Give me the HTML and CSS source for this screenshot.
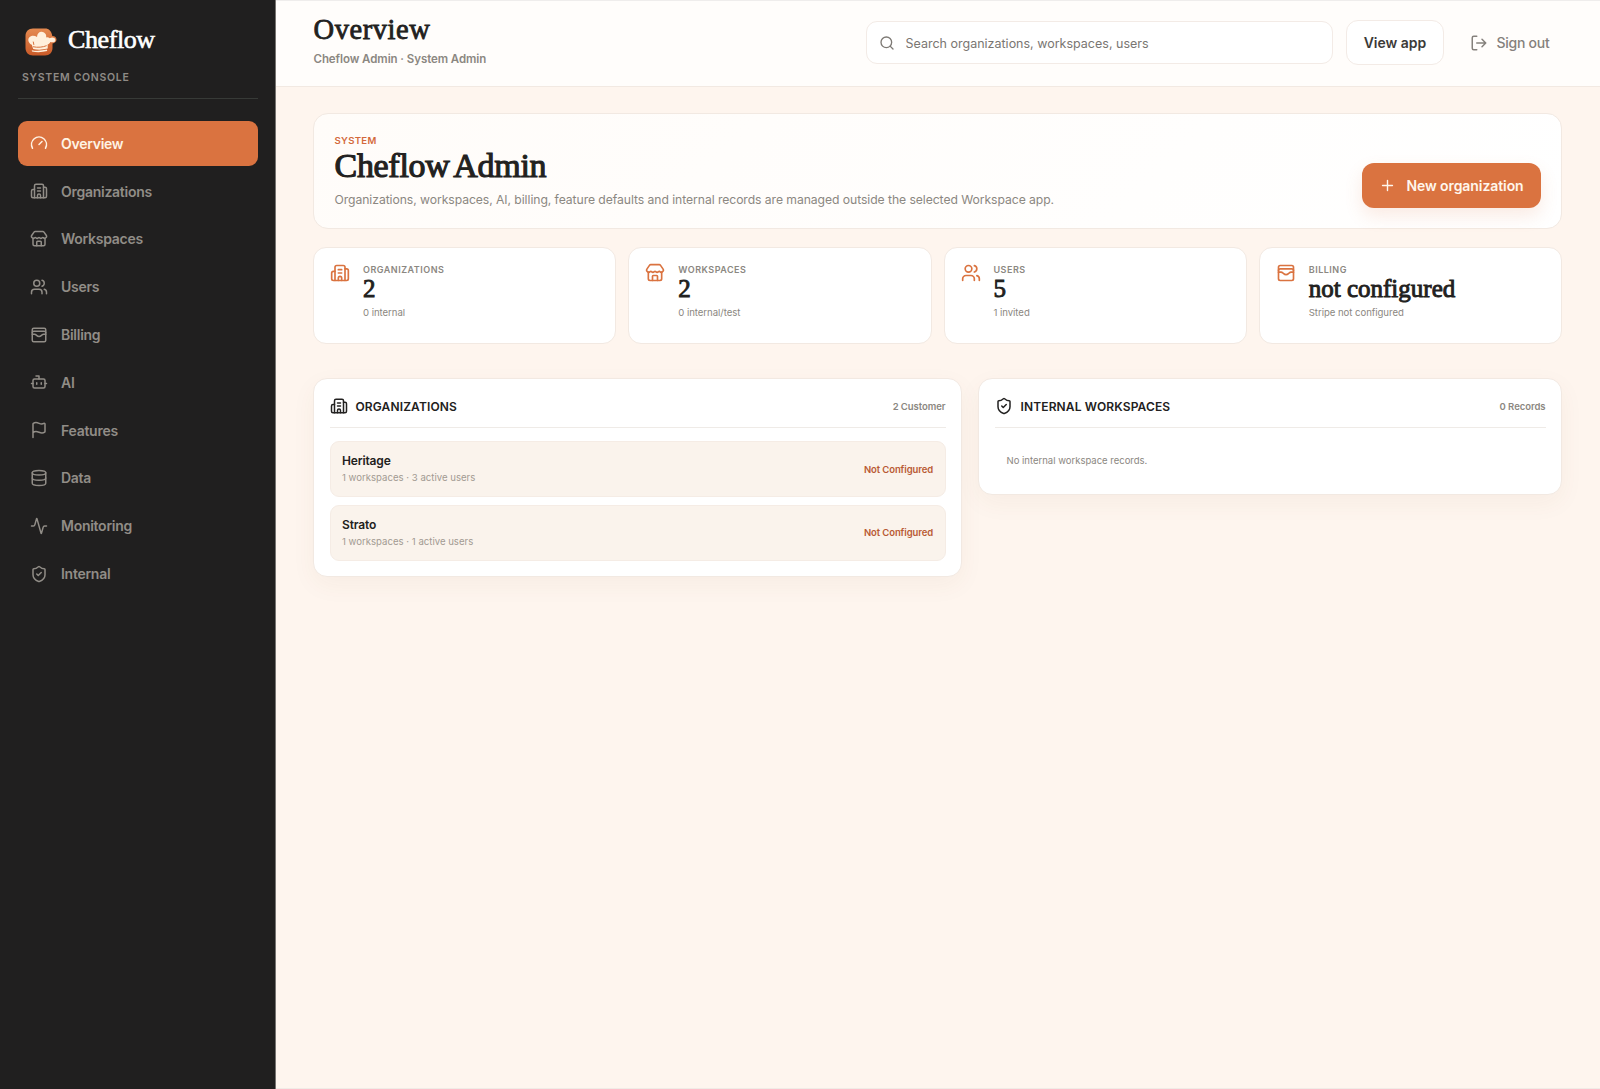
FILE: index.html
```html
<!DOCTYPE html>
<html lang="en">
<head>
  <meta charset="UTF-8" />
  <title>Cheflow Admin</title>
  <link rel="stylesheet" href="styles.css">
</head>
<body>
  <!-- icon sprite -->
  <svg class="sprite" aria-hidden="true">
    <symbol id="i-gauge" viewBox="0 0 24 24"><path d="m12 14 4-4"/><path d="M3.34 19a10 10 0 1 1 17.32 0"/></symbol>
    <symbol id="i-building" viewBox="0 0 24 24"><path d="M10 12h4M10 8h4M14 21v-3a2 2 0 0 0-4 0v3"/><path d="M6 10H4a2 2 0 0 0-2 2v7a2 2 0 0 0 2 2h16a2 2 0 0 0 2-2V9a2 2 0 0 0-2-2h-2"/><path d="M6 21V5a2 2 0 0 1 2-2h8a2 2 0 0 1 2 2v16"/></symbol>
    <symbol id="i-store" viewBox="0 0 24 24"><path d="M15 21v-5a1 1 0 0 0-1-1h-4a1 1 0 0 0-1 1v5"/><path d="M17.774 10.31a1.12 1.12 0 0 0-1.549 0 2.5 2.5 0 0 1-3.451 0 1.12 1.12 0 0 0-1.548 0 2.5 2.5 0 0 1-3.452 0 1.12 1.12 0 0 0-1.549 0 2.5 2.5 0 0 1-3.77-3.248l2.889-4.184A2 2 0 0 1 7 2h10a2 2 0 0 1 1.653.873l2.895 4.192a2.5 2.5 0 0 1-3.774 3.244"/><path d="M4 10.95V19a2 2 0 0 0 2 2h12a2 2 0 0 0 2-2v-8.05"/></symbol>
    <symbol id="i-users" viewBox="0 0 24 24"><path d="M16 21v-2a4 4 0 0 0-4-4H6a4 4 0 0 0-4 4v2"/><path d="M16 3.128a4 4 0 0 1 0 7.744"/><path d="M22 21v-2a4 4 0 0 0-3-3.87"/><circle cx="9" cy="7" r="4"/></symbol>
    <symbol id="i-wallet" viewBox="0 0 24 24"><rect width="18" height="18" x="3" y="3" rx="2"/><path d="M3 9a2 2 0 0 1 2-2h14a2 2 0 0 1 2 2"/><path d="M3 11h3c.8 0 1.6.3 2.1.9l1.1.9c1.6 1.6 4.1 1.6 5.7 0l1.1-.9c.5-.5 1.3-.9 2.1-.9H21"/></symbol>
    <symbol id="i-bot" viewBox="0 0 24 24"><path d="M12 8V4H8"/><rect width="16" height="12" x="4" y="8" rx="2"/><path d="M2 14h2M20 14h2M15 13v2M9 13v2"/></symbol>
    <symbol id="i-flag" viewBox="0 0 24 24"><path d="M4 22V4a1 1 0 0 1 .4-.8A6 6 0 0 1 8 2c3 0 5 2 7.333 2q2 0 3.067-.8A1 1 0 0 1 20 4v10a1 1 0 0 1-.4.8A6 6 0 0 1 16 16c-3 0-5-2-8-2a6 6 0 0 0-4 1.528"/></symbol>
    <symbol id="i-database" viewBox="0 0 24 24"><ellipse cx="12" cy="5" rx="9" ry="3"/><path d="M3 5v14a9 3 0 0 0 18 0V5"/><path d="M3 12a9 3 0 0 0 18 0"/></symbol>
    <symbol id="i-activity" viewBox="0 0 24 24"><path d="M22 12h-2.48a2 2 0 0 0-1.93 1.46l-2.35 8.36a.25.25 0 0 1-.48 0L9.24 2.18a.25.25 0 0 0-.48 0l-2.35 8.36A2 2 0 0 1 4.49 12H2"/></symbol>
    <symbol id="i-shield" viewBox="0 0 24 24"><path d="M20 13c0 5-3.5 7.5-7.66 8.95a1 1 0 0 1-.67-.01C7.5 20.5 4 18 4 13V6a1 1 0 0 1 1-1c2 0 4.5-1.2 6.24-2.72a1.17 1.17 0 0 1 1.52 0C14.51 3.81 17 5 19 5a1 1 0 0 1 1 1z"/><path d="m9 12 2 2 4-4"/></symbol>
    <symbol id="i-search" viewBox="0 0 24 24"><path d="m21 21-4.34-4.34"/><circle cx="11" cy="11" r="8"/></symbol>
    <symbol id="i-logout" viewBox="0 0 24 24"><path d="m16 17 5-5-5-5M21 12H9"/><path d="M9 21H5a2 2 0 0 1-2-2V5a2 2 0 0 1 2-2h4"/></symbol>
    <symbol id="i-plus" viewBox="0 0 24 24"><path d="M5 12h14M12 5v14"/></symbol>
  </svg>

  <div class="app">
    <aside class="sidebar">
      <div class="brand">
        <svg class="logo" viewBox="0 0 32 28">
          <defs>
            <linearGradient id="logo-bg" x1="0" y1="0" x2="0" y2="1">
              <stop offset="0" stop-color="#e58a50"/>
              <stop offset="1" stop-color="#c95a28"/>
            </linearGradient>
          </defs>
          <path fill="url(#logo-bg)" d="M8 .5h12c4 0 6.5 2.5 7.3 7.5 2.7 0 4.2 1.6 4.2 3.6s-1.5 3.6-4 3.9V20c0 4.5-3 7.5-7.5 7.5H8C3.500 27.500.5 24.500.5 20V8C.5 3.500 3.500.5 8 .5z"/>
          <path fill="#fff0dc" d="M6.800 16.800C3.400 15.300 2.400 11.500 4.200 9.500 6 7.400 9.500 7.400 12 9 12.200 5.500 14.500 3.300 17.500 3.900c2.900.6 4.300 3.100 3.600 5.600 1.400-.4 2.700 0 3.700.8 1.800-1.300 5.200-1 5.600 1.400.4 2.400-2.500 3.200-5 2.200-.8 1.500-2 2.200-2.700 2.400v4.300c-5 1.300-10.500 1.400-14.500.4z"/>
          <path fill="none" stroke="#d8743f" stroke-width="1" stroke-linecap="round" d="M8.300 18.800c4.500 1 9.500.4 13-1M8.300 14l.5 2.500"/>
          <path fill="#fff0dc" d="M6.800 22.200c4.500 1 10 .6 15.200-.6l.2 1.500c-5 1.300-10.500 1.400-15.200.5z"/>
        </svg>
        <span class="brand-name">Cheflow</span>
      </div>
      <div class="console-label">System Console</div>
      <nav class="nav">
        <a class="nav-item active"><svg class="icon"><use href="#i-gauge"/></svg><span>Overview</span></a>
        <a class="nav-item"><svg class="icon"><use href="#i-building"/></svg><span>Organizations</span></a>
        <a class="nav-item"><svg class="icon"><use href="#i-store"/></svg><span>Workspaces</span></a>
        <a class="nav-item"><svg class="icon"><use href="#i-users"/></svg><span>Users</span></a>
        <a class="nav-item"><svg class="icon"><use href="#i-wallet"/></svg><span>Billing</span></a>
        <a class="nav-item"><svg class="icon"><use href="#i-bot"/></svg><span>AI</span></a>
        <a class="nav-item"><svg class="icon"><use href="#i-flag"/></svg><span>Features</span></a>
        <a class="nav-item"><svg class="icon"><use href="#i-database"/></svg><span>Data</span></a>
        <a class="nav-item"><svg class="icon"><use href="#i-activity"/></svg><span>Monitoring</span></a>
        <a class="nav-item"><svg class="icon"><use href="#i-shield"/></svg><span>Internal</span></a>
      </nav>
    </aside>

    <div class="main">
      <header class="topbar">
        <div class="page-head">
          <h1>Overview</h1>
          <p>Cheflow Admin · System Admin</p>
        </div>
        <div class="actions">
          <label class="search">
            <svg class="icon"><use href="#i-search"/></svg>
            <input type="text" placeholder="Search organizations, workspaces, users" />
          </label>
          <button class="btn btn-outline">View app</button>
          <button class="btn btn-ghost"><svg class="icon"><use href="#i-logout"/></svg><span>Sign out</span></button>
        </div>
      </header>

      <main class="content">
        <section class="hero">
          <div class="hero-text">
            <div class="eyebrow">System</div>
            <h2>Cheflow Admin</h2>
            <p>Organizations, workspaces, AI, billing, feature defaults and internal records are managed outside the selected Workspace app.</p>
          </div>
          <button class="btn btn-primary"><svg class="icon"><use href="#i-plus"/></svg><span>New organization</span></button>
        </section>

        <section class="stats">
          <div class="stat">
            <svg class="icon"><use href="#i-building"/></svg>
            <div><div class="stat-label">Organizations</div><div class="stat-value">2</div><div class="stat-note">0 internal</div></div>
          </div>
          <div class="stat">
            <svg class="icon"><use href="#i-store"/></svg>
            <div><div class="stat-label">Workspaces</div><div class="stat-value">2</div><div class="stat-note">0 internal/test</div></div>
          </div>
          <div class="stat">
            <svg class="icon"><use href="#i-users"/></svg>
            <div><div class="stat-label">Users</div><div class="stat-value">5</div><div class="stat-note">1 invited</div></div>
          </div>
          <div class="stat">
            <svg class="icon"><use href="#i-wallet"/></svg>
            <div><div class="stat-label">Billing</div><div class="stat-value">not configured</div><div class="stat-note">Stripe not configured</div></div>
          </div>
        </section>

        <section class="panels">
          <div class="panel">
            <div class="panel-head">
              <svg class="icon"><use href="#i-building"/></svg>
              <h3>Organizations</h3>
              <span class="count">2 Customer</span>
            </div>
            <div class="rows">
              <div class="row">
                <div><div class="row-name">Heritage</div><div class="row-meta">1 workspaces · 3 active users</div></div>
                <span class="status">Not Configured</span>
              </div>
              <div class="row">
                <div><div class="row-name">Strato</div><div class="row-meta">1 workspaces · 1 active users</div></div>
                <span class="status">Not Configured</span>
              </div>
            </div>
          </div>
          <div class="panel">
            <div class="panel-head">
              <svg class="icon"><use href="#i-shield"/></svg>
              <h3>Internal Workspaces</h3>
              <span class="count">0 Records</span>
            </div>
            <p class="empty">No internal workspace records.</p>
          </div>
        </section>
      </main>
    </div>
  </div>
</body>
</html>
```
FILE: styles.css
```css
:root {
  --accent: #da7340;
  --bg: #fef5ee;
  --ink: #222120;
  --muted: #8b8781;
  --line: #f2e9e2;
  --dark: #201f1f;
  --serif: "Liberation Serif", "Times New Roman", serif;
  --sans: Inter, "Liberation Sans", sans-serif;
}

* {
  box-sizing: border-box;
}

body {
  margin: 0;
  font-family: var(--sans);
  color: var(--ink);
  background: var(--bg);
}

h1, h2, h3, p {
  margin: 0;
}

.sprite {
  display: none;
}

.icon {
  width: 18px;
  height: 18px;
  flex: none;
  fill: none;
  stroke: currentColor;
  stroke-width: 2;
  stroke-linecap: round;
  stroke-linejoin: round;
}

.app {
  display: flex;
  height: 1089px;
}

/* sidebar */
.sidebar {
  width: 276px;
  flex: none;
  padding: 23px 17px 0 18px;
  background: var(--dark);
  border-right: 1px solid #777471;
}

.brand {
  display: flex;
  align-items: center;
  gap: 11px;
  height: 34px;
  padding-left: 7px;
}

.logo {
  width: 32px;
  height: 28px;
  margin-top: 4px;
}

.brand-name {
  font-family: var(--serif);
  font-size: 26px;
  line-height: 32px;
  color: #fff;
  letter-spacing: -0.4px;
  -webkit-text-stroke: 0.6px #fff;
}

.console-label {
  height: 42px;
  padding: 14px 4px 0;
  border-bottom: 1px solid #373a37;
  font-size: 10.5px;
  line-height: 14px;
  font-weight: 600;
  letter-spacing: 0.7px;
  text-transform: uppercase;
  color: #8f8b86;
}

.nav {
  display: flex;
  flex-direction: column;
  gap: 3px;
  margin-top: 22px;
}

.nav-item {
  display: flex;
  align-items: center;
  gap: 13px;
  height: 44.8px;
  padding: 0 12px;
  border-radius: 9px;
  font-size: 14px;
  font-weight: 600;
  letter-spacing: -0.27px;
  color: #918d87;
}

.nav-item.active {
  background: var(--accent);
  color: #fff3e4;
}

/* top bar */
.main {
  flex: 1;
  min-width: 0;
  border-bottom: 1px solid #f1ebe6;
}

.topbar {
  display: flex;
  align-items: center;
  justify-content: space-between;
  height: 87px;
  padding: 0 38px 2px 37px;
  background: #fffdfb;
  border-top: 1px solid #efedec;
  border-bottom: 1px solid var(--line);
}

.page-head {
  padding: 0 0 5px 0.5px;
}

.page-head h1 {
  font-family: var(--serif);
  font-size: 28.5px;
  line-height: 34px;
  font-weight: 400;
  letter-spacing: 0.55px;
  -webkit-text-stroke: 0.8px var(--ink);
}

.page-head p {
  margin-top: 4px;
  font-size: 11.5px;
  line-height: 16px;
  font-weight: 600;
  letter-spacing: -0.07px;
  color: var(--muted);
}

.actions {
  display: flex;
  align-items: center;
  gap: 14px;
}

.search {
  display: flex;
  align-items: center;
  gap: 11px;
  width: 467px;
  height: 43px;
  margin-right: -1px;
  padding: 1px 12px 0 11.5px;
  background: #fff;
  border: 1.5px solid #f3ebe6;
  border-radius: 11px;
  color: #7d7974;
}

.search .icon {
  width: 16px;
  height: 16px;
}

.search input {
  flex: 1;
  padding: 0;
  border: 0;
  outline: 0;
  background: none;
  font: 400 12.5px var(--sans);
}

.search input::placeholder {
  color: #7a7672;
}

.btn {
  display: flex;
  align-items: center;
  justify-content: center;
  height: 45px;
  border: 0;
  border-radius: 12px;
  font-family: var(--sans);
  font-size: 14px;
  font-weight: 600;
  white-space: nowrap;
  cursor: pointer;
}

.btn-outline {
  width: 98px;
  background: #fff;
  border: 1.5px solid #f3ebe6;
  color: #3c3a38;
}

.btn-ghost {
  gap: 8px;
  width: 104px;
  background: none;
  font-weight: 500;
  letter-spacing: -0.25px;
  color: #85817c;
}

.btn-primary {
  gap: 10px;
  width: 179px;
  background: var(--accent);
  color: #fff6ec;
  letter-spacing: -0.08px;
  box-shadow: 0 8px 18px rgba(218, 115, 64, 0.14);
}

.btn-primary .icon {
  width: 17px;
  height: 17px;
}

/* content */
.content {
  padding: 26px 38px 0 37px;
}

.hero {
  display: flex;
  align-items: flex-end;
  justify-content: space-between;
  height: 116px;
  padding: 0 20px 20px;
  background: linear-gradient(135deg, #fffcf9, #fff);
  border: 1.5px solid var(--line);
  border-radius: 15px;
}

.eyebrow {
  font-size: 9.6px;
  line-height: 12px;
  font-weight: 600;
  letter-spacing: 0.3px;
  text-transform: uppercase;
  color: #d3693c;
}

.hero-text {
  padding-left: 0.5px;
}

.hero h2 {
  margin-top: 1px;
  font-family: var(--serif);
  font-size: 34px;
  line-height: 36px;
  font-weight: 400;
  letter-spacing: -0.3px;
  word-spacing: -2.5px;
  -webkit-text-stroke: 1.1px var(--ink);
}

.hero p {
  margin-top: 8px;
  font-size: 12.2px;
  line-height: 16px;
  letter-spacing: -0.07px;
  color: var(--muted);
}

.stats {
  display: grid;
  grid-template-columns: repeat(4, 1fr);
  gap: 12px;
  margin-top: 18px;
}

.stat {
  display: flex;
  gap: 13px;
  height: 97px;
  padding: 15px 16px;
  background: #fff;
  border: 1.5px solid var(--line);
  border-radius: 13px;
}

.stat .icon {
  width: 20px;
  height: 20px;
  color: var(--accent);
}

.stat-label {
  margin-top: 1px;
  font-size: 9px;
  line-height: 12px;
  font-weight: 600;
  letter-spacing: 0.5px;
  text-transform: uppercase;
  color: var(--muted);
}

.stat-value {
  font-family: var(--serif);
  font-size: 25px;
  line-height: 26px;
  -webkit-text-stroke: 0.9px var(--ink);
}

.stat-note {
  margin-top: 4px;
  font-size: 9.6px;
  line-height: 14px;
  letter-spacing: -0.05px;
  color: var(--muted);
}

.panels {
  display: grid;
  grid-template-columns: 649px 1fr;
  align-items: start;
  gap: 16px;
  margin-top: 34px;
}

.panel {
  padding: 15px 15.5px;
  background: #fff;
  border: 1.5px solid var(--line);
  border-radius: 14px;
  box-shadow: 0 8px 24px rgba(120, 70, 30, 0.05);
}

.panel-head {
  display: flex;
  align-items: center;
  gap: 8px;
  height: 34px;
  padding-bottom: 9px;
  border-bottom: 1px solid #efebe7;
}

.panel-head h3 {
  font-size: 12px;
  font-weight: 600;
  letter-spacing: 0.13px;
  text-transform: uppercase;
}

.count {
  margin-left: auto;
  font-size: 9.5px;
  font-weight: 600;
  letter-spacing: -0.05px;
  color: var(--muted);
}

.rows {
  display: grid;
  gap: 7.5px;
  margin-top: 13px;
}

.row {
  display: flex;
  align-items: center;
  justify-content: space-between;
  height: 56px;
  padding: 0 11.5px;
  background: #faf3ec;
  border: 1px solid #f5ece5;
  border-radius: 9px;
}

.row-name {
  font-size: 12px;
  line-height: 16px;
  font-weight: 600;
  letter-spacing: -0.15px;
}

.row-meta {
  margin-top: 2px;
  font-size: 9.6px;
  line-height: 14px;
  color: #a29a92;
}

.status {
  font-size: 9.5px;
  font-weight: 600;
  letter-spacing: -0.1px;
  color: #b95a34;
}

.empty {
  padding: 26px 12px 12px;
  font-size: 9.5px;
  line-height: 13px;
  color: var(--muted);
}
```
